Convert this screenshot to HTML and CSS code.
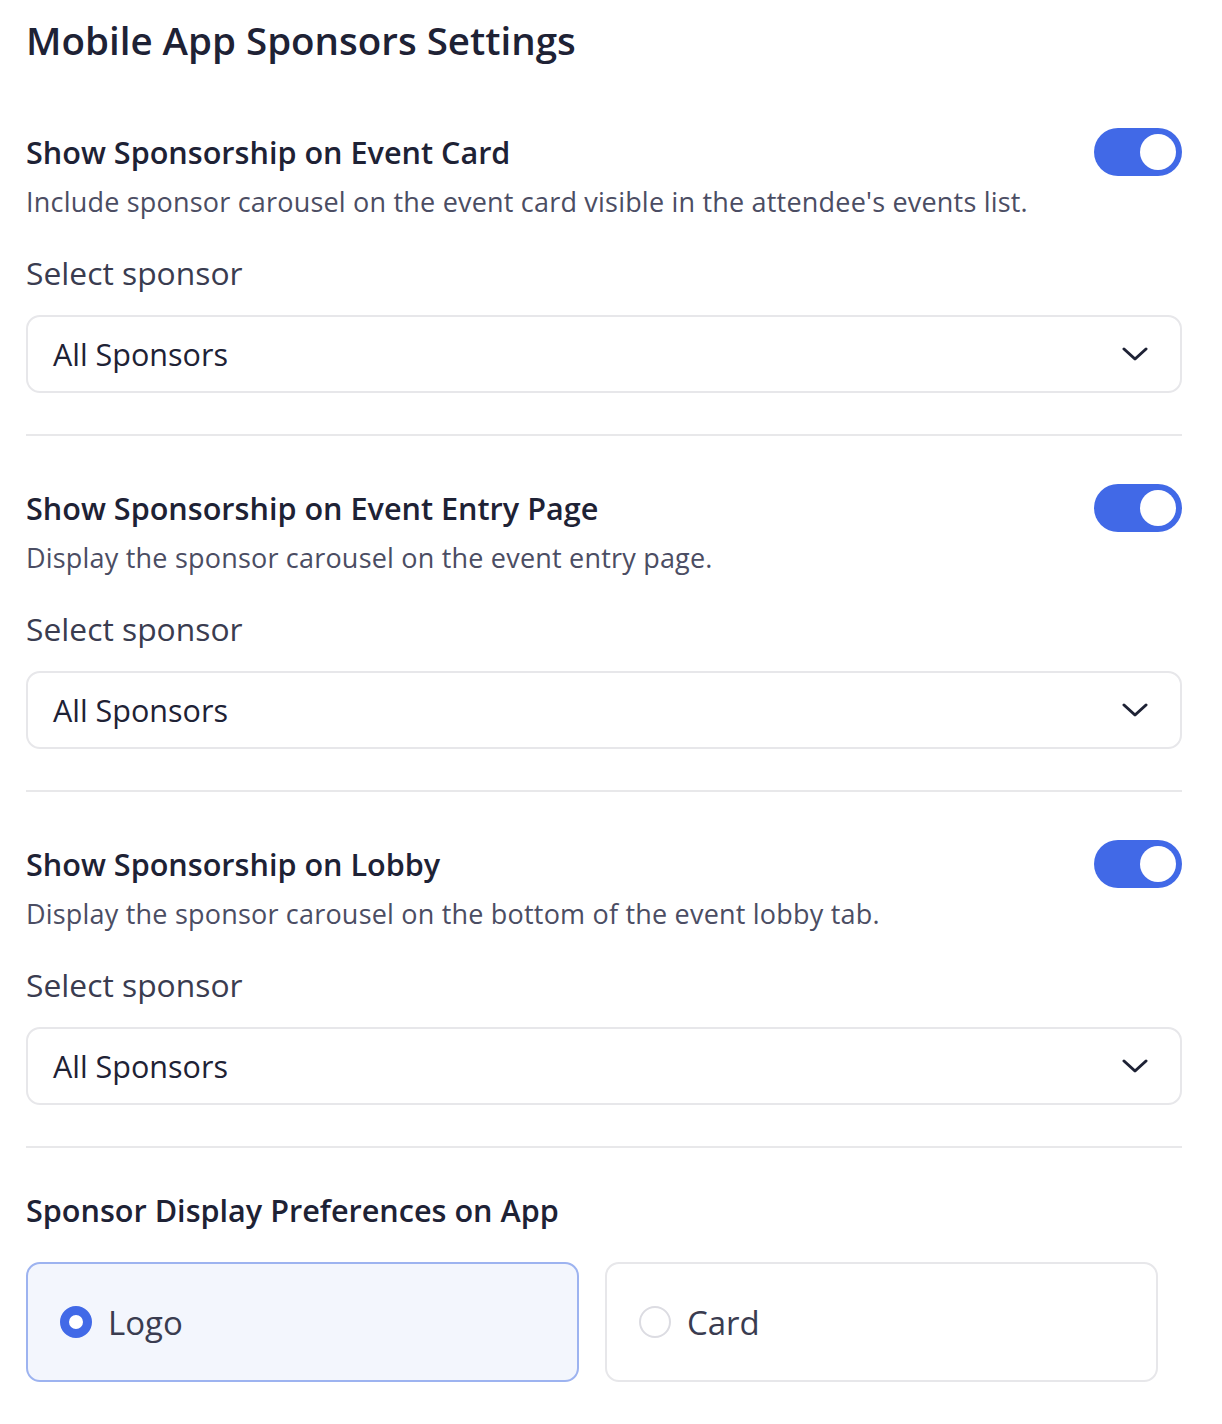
FILE: index.html
```html
<!DOCTYPE html>
<html lang="en">
<head>
<meta charset="utf-8">
<title>Mobile App Sponsors Settings</title>
<link rel="stylesheet" href="styles.css">
</head>
<body>
<main class="page">
  <h1 class="title">Mobile App Sponsors Settings</h1>

  <section class="section">
    <div class="row">
      <h2 class="heading">Show Sponsorship on Event Card</h2>
      <span class="toggle"><span class="knob"></span></span>
    </div>
    <p class="desc">Include sponsor carousel on the event card visible in the attendee's events list.</p>
    <label class="label">Select sponsor</label>
    <div class="select">
      <span>All Sponsors</span>
      <svg class="chev" width="26" height="16" viewBox="0 0 26 16"><path d="M2 3l11 10L24 3" fill="none" stroke="#1e2235" stroke-width="3" stroke-linecap="round" stroke-linejoin="round"/></svg>
    </div>
  </section>
  <hr class="divider">

  <section class="section">
    <div class="row">
      <h2 class="heading">Show Sponsorship on Event Entry Page</h2>
      <span class="toggle"><span class="knob"></span></span>
    </div>
    <p class="desc">Display the sponsor carousel on the event entry page.</p>
    <label class="label">Select sponsor</label>
    <div class="select">
      <span>All Sponsors</span>
      <svg class="chev" width="26" height="16" viewBox="0 0 26 16"><path d="M2 3l11 10L24 3" fill="none" stroke="#1e2235" stroke-width="3" stroke-linecap="round" stroke-linejoin="round"/></svg>
    </div>
  </section>
  <hr class="divider">

  <section class="section">
    <div class="row">
      <h2 class="heading">Show Sponsorship on Lobby</h2>
      <span class="toggle"><span class="knob"></span></span>
    </div>
    <p class="desc">Display the sponsor carousel on the bottom of the event lobby tab.</p>
    <label class="label">Select sponsor</label>
    <div class="select">
      <span>All Sponsors</span>
      <svg class="chev" width="26" height="16" viewBox="0 0 26 16"><path d="M2 3l11 10L24 3" fill="none" stroke="#1e2235" stroke-width="3" stroke-linecap="round" stroke-linejoin="round"/></svg>
    </div>
  </section>
  <hr class="divider">

  <section class="prefs">
    <h2 class="heading">Sponsor Display Preferences on App</h2>
    <div class="options">
      <div class="option selected"><span class="radio on"></span><span>Logo</span></div>
      <div class="option"><span class="radio"></span><span>Card</span></div>
    </div>
  </section>
</main>
</body>
</html>
```

FILE: styles.css
```css
* { box-sizing: border-box; }
body {
  margin: 0;
  background: #ffffff;
  font-family: "Open Sans", "Noto Sans", sans-serif;
  color: #1e2235;
}
.page {
  padding: 16px 40px 0 26px;
}
.title {
  margin: 0;
  font-size: 38.5px;
  line-height: 48px;
  font-weight: 600;
  color: #1e2235;
}
.section {
  display: flex;
  flex-direction: column;
}
.page > .section:first-of-type { margin-top: 64px; }
.row {
  display: flex;
  align-items: center;
  justify-content: space-between;
  height: 48px;
}
.heading {
  margin: 0;
  font-size: 30.6px;
  line-height: 40px;
  font-weight: 600;
  color: #1e2235;
}
.toggle {
  width: 88px;
  height: 48px;
  border-radius: 24px;
  background: #4169e7;
  display: flex;
  align-items: center;
  justify-content: flex-end;
  padding-right: 6px;
}
.knob {
  width: 36px;
  height: 36px;
  border-radius: 50%;
  background: #ffffff;
}
.desc {
  margin: 10px 0 0;
  font-size: 27px;
  line-height: 32px;
  letter-spacing: 0.2px;
  color: #4b4d63;
}
.label {
  margin-top: 39px;
  font-size: 31.8px;
  line-height: 32px;
  color: #3a3c50;
}
.select {
  margin-top: 26px;
  height: 78px;
  border: 2px solid #e7e7ea;
  border-radius: 14px;
  display: flex;
  align-items: center;
  justify-content: space-between;
  padding: 0 32px 0 25px;
  font-size: 30.5px;
  color: #1e2235;
}
.divider {
  margin: 41px 0 48px;
  border: 0;
  border-top: 2px solid #e8e8ea;
  width: 100%;
}
.prefs { display: flex; flex-direction: column; margin-top: -6px; }
.options {
  margin-top: 32px;
  display: flex;
  gap: 26px;
  padding-right: 24px;
}
.option {
  flex: 1;
  height: 120px;
  border: 2px solid #e7e7ea;
  border-radius: 14px;
  display: flex;
  align-items: center;
  gap: 16px;
  padding-left: 32px;
  font-size: 33px;
  color: #3a3c50;
}
.option.selected {
  background: #f3f6fd;
  border-color: #9db3f0;
}
.radio {
  width: 32px;
  height: 32px;
  border-radius: 50%;
  border: 2px solid #dcdce2;
  background: #ffffff;
}
.radio.on {
  border: 9px solid #4169e7;
}
```
